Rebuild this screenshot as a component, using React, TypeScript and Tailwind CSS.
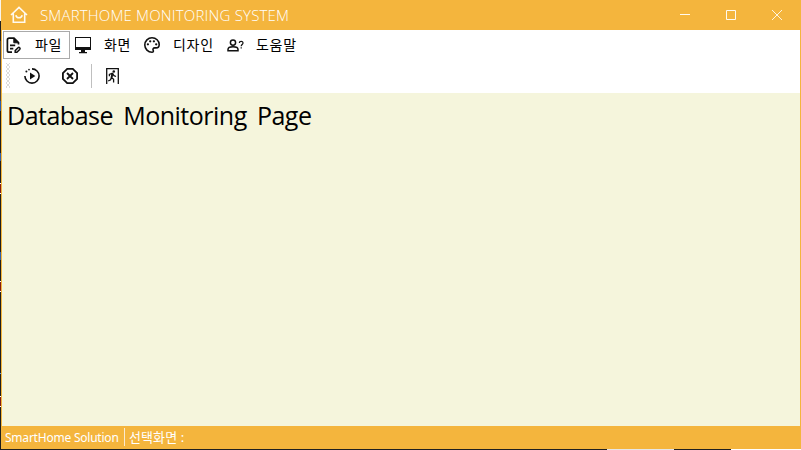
import React from "react";

const edgeMarks = [
  { h: "h-[21px]", c: "bg-[#f8f4ee]" },
  { h: "h-[20px]", c: "bg-[#202020]" },
  { h: "h-[60px]", c: "bg-[#4a4542]" },
  { h: "h-[10px]", c: "bg-[#2b5cad]" },
  { h: "h-[42px]", c: "bg-[#1e1e1e]" },
  { h: "h-[8px]", c: "bg-[#315fa8]" },
  { h: "h-[22px]", c: "bg-[#1e1e1e]" },
  { h: "h-[1px]", c: "bg-white" },
  { h: "h-[9px]", c: "bg-[#821b14]" },
  { h: "h-[1px]", c: "bg-white" },
  { h: "h-[58px]", c: "bg-[#1e1e1e]" },
  { h: "h-[8px]", c: "bg-[#315fa8]" },
  { h: "h-[21px]", c: "bg-[#1e1e1e]" },
  { h: "h-[1px]", c: "bg-white" },
  { h: "h-[9px]", c: "bg-[#821b14]" },
  { h: "h-[1px]", c: "bg-white" },
  { h: "h-[81px]", c: "bg-[#1e1e1e]" },
  { h: "h-[1px]", c: "bg-[#5c9cd6]" },
  { h: "h-[22px]", c: "bg-[#1e1e1e]" },
  { h: "h-[1px]", c: "bg-white" },
  { h: "h-[9px]", c: "bg-[#821b14]" },
  { h: "h-[1px]", c: "bg-white" },
  { h: "h-[43px]", c: "bg-[#1e1e1e]" },
];

type IconProps = { className?: string };

const HomeIcon = ({ className }: IconProps) => (
  <svg className={className} viewBox="0 0 18 18" fill="none" stroke="#fffaf0" strokeWidth="1.6">
    <path d="M1 9 9 1.4 17 9M3.3 7.5v8.7h11.4V7.5" />
    <path d="M5.8 9.2a3.3 3.3 0 0 0 6.4 0" />
  </svg>
);

const FileIcon = ({ className }: IconProps) => (
  <svg className={className} viewBox="0 0 16 17" fill="none" stroke="#111" strokeWidth="1.7">
    <path d="M6 15.2H3.2Q1.4 15.2 1.4 13.4V3Q1.4 1.2 3.2 1.2H8l4.5 4.3v2" />
    <path d="M7.8 1v4.8h4.8z" fill="#111" strokeWidth="1" />
    <path d="M4 8.4h5.2M4 11.7h3.3" />
    <path d="m9.2 13.6 2.8-2.8q.9-.8 1.7 0t0 1.7l-2.8 2.8H9.2z" strokeWidth="1.5" />
  </svg>
);

const MonitorIcon = ({ className }: IconProps) => (
  <svg className={className} viewBox="0 0 16 17">
    <path fill="#111" fillRule="evenodd" d="M0 0h16v13h-6v2h2v1.3H4V15h2v-2H0zM1 1v9h14V1z" />
  </svg>
);

const PaletteIcon = ({ className }: IconProps) => (
  <svg className={className} viewBox="0 0 16 16" fill="none" stroke="#111" strokeWidth="1.6">
    <path d="M8 .8A7.2 7.2 0 1 0 8 15.2c1.3 0 1.7-1 1.2-1.9-.7-1.3.1-2.4 1.5-2.4H12c2 0 3.2-1.5 3.2-3.4C15.2 3.7 12 .8 8 .8z" />
    <g fill="#111" stroke="none">
      <circle cx="3.9" cy="7.3" r="1.15" />
      <circle cx="6.2" cy="4.3" r="1.15" />
      <circle cx="9.9" cy="4.3" r="1.15" />
      <circle cx="12.2" cy="7.3" r="1.15" />
    </g>
  </svg>
);

const HelpPersonIcon = ({ className }: IconProps) => (
  <svg className={className} viewBox="0 0 17 13" fill="none" stroke="#111" strokeWidth="1.5">
    <circle cx="6" cy="3.6" r="2.6" />
    <path d="M1 11.7V10.4C1 8.7 3.5 7.8 6 7.8s5 .9 5 2.6v1.3z" />
    <path d="M12.3 4.1c0-2.2 3.7-2.3 3.7-.1 0 1.5-1.8 1.5-1.8 3.2M14.2 8.2v1.3" strokeWidth="1.2" />
  </svg>
);

const PlayIcon = ({ className }: IconProps) => (
  <svg className={className} viewBox="0 0 16 16" fill="none" stroke="#111" strokeWidth="1.6">
    <path d="M8 .9A7.1 7.1 0 1 1 .9 8" />
    <path d="M6 4.6v6.8L11.3 8z" fill="#111" stroke="none" />
    <circle cx="2.4" cy="3.6" r="1" fill="#111" stroke="none" />
    <circle cx="5" cy="1.6" r=".85" fill="#111" stroke="none" />
  </svg>
);

const StopIcon = ({ className }: IconProps) => (
  <svg className={className} viewBox="0 0 16 16" fill="none" stroke="#111" strokeWidth="1.8">
    <path d="M5.2.9h5.6l4.3 4.3v5.6l-4.3 4.3H5.2L.9 10.8V5.2z" />
    <path d="m5 5 6 6m0-6-6 6" />
  </svg>
);

const ExitIcon = ({ className }: IconProps) => (
  <svg className={className} viewBox="0 0 13 16" fill="none" stroke="#111">
    <path d="M.7 16V.7h11.6V16" strokeWidth="1.3" />
    <circle cx="7.8" cy="3.6" r="1.25" fill="#111" stroke="none" />
    <path d="M3.4 8.2V6.5l2.8-1.3L8 7.7l2 .8M6.2 5.7 5.3 9.2l2.3 2v3.3M5.4 9.5l-.8 2.3-2.4 1.2" strokeWidth="1.3" />
    <path d="M6 5.4h1.2l-.8 3.8H5.3z" fill="#111" strokeWidth=".5" />
  </svg>
);

const Titlebar = () => (
  <header className="flex h-[30px] shrink-0 items-center bg-[#f4b53d] pl-[9px] text-[#fffaf0]">
    <HomeIcon className="h-[18px] w-[18px] shrink-0" />
    <h1 className="ml-[12px] w-[260px] whitespace-nowrap font-['Open_Sans','Noto_Sans',sans-serif] text-[15px] leading-[30px] font-[340] tracking-[0.18px] text-white">
      SMARTHOME MONITORING SYSTEM
    </h1>
    <div className="ml-auto mr-[19px] flex gap-[36px]">
      <svg className="h-[10px] w-[10px]" viewBox="0 0 10 10"><path d="M0 4.5h10" stroke="currentColor" /></svg>
      <svg className="h-[10px] w-[10px]" viewBox="0 0 10 10"><path d="M.5.5h9v9h-9z" fill="none" stroke="currentColor" /></svg>
      <svg className="h-[10px] w-[10px]" viewBox="0 0 10 10"><path d="m0 0 10 10M10 0 0 10" stroke="currentColor" strokeWidth=".9" /></svg>
    </div>
  </header>
);

const Menu = () => (
  <nav className="flex h-[30px] shrink-0 items-center bg-white pl-px font-['Noto_Sans_CJK_KR',sans-serif] text-[14px] leading-[20px] tracking-[0.7px] text-black">
    <button className="flex h-[28px] w-[67px] items-center border border-[#aaa] pl-[2px]">
      <FileIcon className="h-[17px] w-[16px] shrink-0" />
      <span className="mb-[3px] ml-[13px] whitespace-nowrap">파일</span>
    </button>
    <button className="flex h-[28px] w-[69px] items-center pl-[5px]">
      <MonitorIcon className="h-[17px] w-[16px] shrink-0" />
      <span className="mb-[3px] ml-[13px] whitespace-nowrap">화면</span>
    </button>
    <button className="flex h-[28px] w-[83px] items-center pl-[5px]">
      <PaletteIcon className="h-[16px] w-[16px] shrink-0" />
      <span className="mb-[3px] ml-[13px] whitespace-nowrap">디자인</span>
    </button>
    <button className="flex h-[28px] w-[83px] items-center pl-[5px]">
      <HelpPersonIcon className="h-[13px] w-[17px] shrink-0" />
      <span className="mb-[3px] ml-[12px] whitespace-nowrap">도움말</span>
    </button>
  </nav>
);

const Toolbar = () => (
  <div className="flex h-[33px] shrink-0 items-center bg-white pb-[2px] pl-[4px]">
    <svg className="h-[25px] w-[4px]" shapeRendering="crispEdges">
      <defs>
        <pattern id="grip" width="4" height="4" patternUnits="userSpaceOnUse">
          <path d="M0 0h1v1H0zM3 0h1v1H3zM1 1h2v1H1zM1 2h2v1H1zM0 3h1v1H0zM3 3h1v1H3z" fill="#dcdcdc" />
        </pattern>
      </defs>
      <rect width="4" height="25" fill="url(#grip)" />
    </svg>
    <button className="ml-[14px]"><PlayIcon className="h-[16px] w-[16px]" /></button>
    <button className="ml-[22px]"><StopIcon className="h-[16px] w-[16px]" /></button>
    <div className="ml-[13px] h-[24px] w-px bg-[#bfbfbf]" />
    <button className="ml-[14px]"><ExitIcon className="h-[16px] w-[13px]" /></button>
  </div>
);

export default function App() {
  return (
    <div className="flex h-[450px] w-[801px] overflow-hidden">
      <div className="flex w-px shrink-0 flex-col">
        {edgeMarks.map((m, i) => <div key={i} className={`shrink-0 ${m.h} ${m.c}`} />)}
      </div>
      <div className="flex w-[800px] flex-col">
        <div className="flex h-[449px] flex-col">
          <Titlebar />
          <div className="flex h-[396px] flex-col border-x border-[#f4b53d] bg-[#f5f5dc]">
            <Menu />
            <Toolbar />
            <main className="pl-[5px] pt-[4px]">
              <h2 className="whitespace-nowrap font-['Open_Sans','Noto_Sans',sans-serif] text-[25px] leading-[36px] tracking-[-0.5px] [word-spacing:4.2px] text-black">
                Database Monitoring Page
              </h2>
            </main>
          </div>
          <footer className="flex h-[23px] shrink-0 items-center bg-[#f4b53d] pl-[4px] font-['Noto_Sans','Noto_Sans_CJK_KR',sans-serif] text-[12px] leading-[22px] text-white">
            <span className="w-[119px] whitespace-nowrap tracking-[-0.22px]">SmartHome Solution</span>
            <div className="mb-[1px] h-[18px] w-px bg-[#faead0]" />
            <span className="mb-[2px] ml-[4px] whitespace-nowrap text-[13px] tracking-[0.1px]">선택화면 :</span>
          </footer>
        </div>
        <div className="flex h-px">
          <div className="w-[606px] bg-[#202020]" />
          <div className="w-[67px] bg-[#e6e6e6]" />
          <div className="w-[57px] bg-[#202020]" />
          <div className="flex-1 bg-white" />
        </div>
      </div>
    </div>
  );
}
